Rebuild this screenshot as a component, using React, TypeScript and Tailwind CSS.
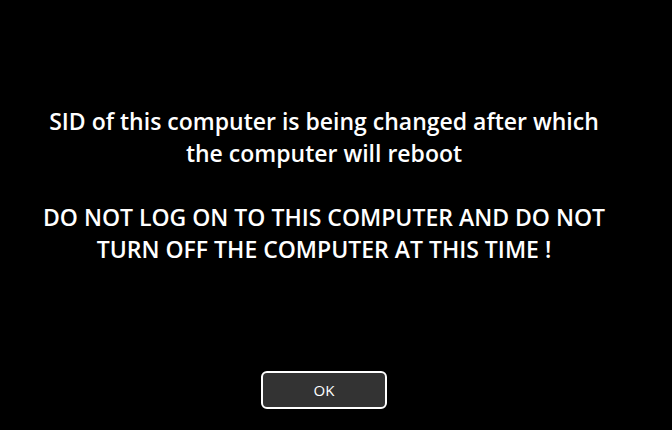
export default function App() {
  return (
    <div
      className="flex h-[430px] w-[672px] flex-col bg-black text-white"
      style={{ fontFamily: '"Open Sans", "Noto Sans", sans-serif' }}
    >
      <div className="flex w-[648px] flex-col items-center pt-[105px] text-center text-[23px] font-semibold leading-[32px]">
        <p>SID of this computer is being changed after which</p>
        <p>the computer will reboot</p>
        <p>&nbsp;</p>
        <p>DO NOT LOG ON TO THIS COMPUTER AND DO NOT</p>
        <p>TURN OFF THE COMPUTER AT THIS TIME !</p>
      </div>
      <div className="mt-auto flex w-[648px] justify-center pb-[21px]">
        <button className="h-[38px] w-[126px] rounded-[6px] border-2 border-white bg-[#333333] text-[15px] text-white">
          OK
        </button>
      </div>
    </div>
  );
}
